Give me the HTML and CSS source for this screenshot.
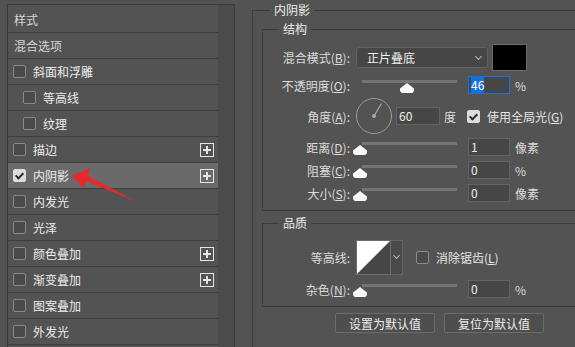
FILE: index.html
```html
<!DOCTYPE html>
<html lang="zh-CN">
<head>
  <meta charset="UTF-8" />
  <title>图层样式 - 内阴影</title>
  <link rel="stylesheet" href="styles.css">
</head>
<body>

<div class="styles-panel">
  <ul class="style-list">
    <li class="item plain">样式</li>
    <li class="item plain">混合选项</li>
    <li class="item"><span class="box"></span>斜面和浮雕</li>
    <li class="item sub"><span class="box"></span>等高线</li>
    <li class="item sub"><span class="box"></span>纹理</li>
    <li class="item"><span class="box"></span>描边<span class="add"></span></li>
    <li class="item active"><span class="box checked"></span>内阴影<span class="add"></span></li>
    <li class="item"><span class="box"></span>内发光</li>
    <li class="item"><span class="box"></span>光泽</li>
    <li class="item"><span class="box"></span>颜色叠加<span class="add"></span></li>
    <li class="item"><span class="box"></span>渐变叠加<span class="add"></span></li>
    <li class="item"><span class="box"></span>图案叠加</li>
    <li class="item"><span class="box"></span>外发光</li>
  </ul>
  <div class="gutter"></div>
</div>

<fieldset class="group outer">
  <legend>内阴影</legend>

  <fieldset class="group inner">
    <legend>结构</legend>

    <div class="row first">
      <label>混合模式(<u>B</u>):</label>
      <div class="select">正片叠底<span class="chev"></span></div>
      <div class="swatch"></div>
    </div>

    <div class="row r5">
      <label>不透明度(<u>O</u>):</label>
      <div class="slider"><div class="track"></div><span class="thumb" style="left: 44px"></span></div>
      <div class="field focus"><span class="sel">46</span></div>
      <span class="unit">%</span>
    </div>

    <div class="row angle">
      <label>角度(<u>A</u>):</label>
      <svg class="dial" width="36" height="36" viewBox="0 0 36 36">
        <circle cx="18" cy="18" r="17.5" fill="none" stroke="#9c9c9c" stroke-width="1"/>
        <line x1="18" y1="18" x2="25.5" y2="5.5" stroke="#a8a8a8" stroke-width="1.2"/>
        <circle cx="18" cy="18" r="2" fill="#a8a8a8"/>
      </svg>
      <div class="field short">60</div>
      <span class="unit deg">度</span>
      <span class="box checked"></span>
      <span class="opt">使用全局光(<u>G</u>)</span>
    </div>

    <div class="row r4">
      <label>距离(<u>D</u>):</label>
      <div class="slider"><div class="track"></div><span class="thumb" style="left: -3px"></span></div>
      <div class="field">1</div>
      <span class="unit">像素</span>
    </div>

    <div class="row r5">
      <label>阻塞(<u>C</u>):</label>
      <div class="slider"><div class="track"></div><span class="thumb" style="left: -3px"></span></div>
      <div class="field">0</div>
      <span class="unit">%</span>
    </div>

    <div class="row r5">
      <label>大小(<u>S</u>):</label>
      <div class="slider"><div class="track"></div><span class="thumb" style="left: -3px"></span></div>
      <div class="field">0</div>
      <span class="unit">像素</span>
    </div>
  </fieldset>

  <fieldset class="group inner quality">
    <legend>品质</legend>

    <div class="row contour-row">
      <label>等高线:</label>
      <div class="contour">
        <svg width="35" height="35" viewBox="0 0 35 35">
          <rect x="0" y="0" width="35" height="35" fill="#474747"/>
          <polygon points="1,1 34,1 1,34" fill="#ffffff"/>
          <rect x="0.5" y="0.5" width="34" height="34" fill="none" stroke="#6e6e6e"/>
        </svg>
        <div class="contour-drop"><span class="chev"></span></div>
      </div>
      <span class="box aa"></span>
      <span class="opt">消除锯齿(<u>L</u>)</span>
    </div>

    <div class="row r5">
      <label>杂色(<u>N</u>):</label>
      <div class="slider"><div class="track"></div><span class="thumb" style="left: -3px"></span></div>
      <div class="field">0</div>
      <span class="unit">%</span>
    </div>
  </fieldset>

  <div class="buttons">
    <button class="btn">设置为默认值</button>
    <button class="btn">复位为默认值</button>
  </div>
</fieldset>

<svg class="arrow" width="575" height="347" viewBox="0 0 575 347">
  <polygon points="72,176 90,168 88,176 137,202 86,181 84,188" fill="#e8282b"/>
</svg>

</body>
</html>
```

FILE: styles.css
```css
body {
  margin: 0;
  width: 575px;
  height: 347px;
  overflow: hidden;
  background-color: #535353;
  font-family: "Noto Sans CJK SC", "Noto Sans", sans-serif;
  font-size: 12px;
  color: #e2e2e2;
  display: flex;
  align-items: flex-start;
  position: relative;
}

u {
  text-decoration: underline;
  text-underline-offset: 1px;
}

/* left list */
.styles-panel {
  margin: 4px 0 0 7px;
  width: 226px;
  height: 343px;
  border: 1px solid #3b3b3b;
  border-bottom: none;
  display: flex;
  flex-shrink: 0;
  overflow: hidden;
}

.style-list {
  list-style: none;
  margin: 0;
  padding: 2px 0 0;
  width: 210px;
}

.item {
  height: 25px;
  border-bottom: 1px solid #3d3d3d;
  display: flex;
  align-items: center;
  padding-left: 5px;
  line-height: 25px;
  color: #ececec;
}

.item.plain {
  padding-left: 6px;
  color: #d6d6d6;
}

.item.sub {
  padding-left: 15px;
}

.item.active {
  background-color: #6a6a6a;
}

.box {
  width: 11px;
  height: 11px;
  border: 1px solid #8a8a8a;
  border-radius: 2px;
  background-color: #4a4a4a;
  margin-right: 7px;
  flex-shrink: 0;
  position: relative;
}

.box.checked {
  background-color: #dcdcdc;
  border-color: #dcdcdc;
}

.box.checked::after {
  content: "";
  position: absolute;
  left: 3px;
  top: 1px;
  width: 3px;
  height: 6px;
  border: solid #2a2a2a;
  border-width: 0 2px 2px 0;
  transform: rotate(45deg);
}

.add {
  margin-left: auto;
  margin-right: 4px;
  width: 12px;
  height: 12px;
  border: 1.5px solid #e4e4e4;
  position: relative;
}

.add::before,
.add::after {
  content: "";
  position: absolute;
  background-color: #e4e4e4;
}

.add::before {
  left: 2px;
  right: 2px;
  top: 5px;
  height: 2px;
}

.add::after {
  top: 2px;
  bottom: 2px;
  left: 5px;
  width: 2px;
}

.gutter {
  flex: 1;
  background-color: #4b4b4b;
}

/* right side groups */
.group {
  margin: 0;
  padding: 0;
  border: 1px solid #3c3c3c;
  min-width: 0;
}

.group legend {
  padding: 0 4px;
  line-height: 16px;
  color: #ececec;
}

.outer {
  margin: 2px 0 0 17px;
  width: 340px;
  height: 345px;
  border-bottom: none;
  flex-shrink: 0;
  overflow: hidden;
}

.outer > legend {
  margin-left: 17px;
}

.inner {
  margin: 3px 0 0 9px;
  width: 320px;
  padding-top: 7px;
  padding-bottom: 8px;
}

.inner > legend {
  margin-left: 16px;
}

.quality {
  margin-top: 4px;
  padding-top: 9px;
}

.row {
  display: flex;
  align-items: center;
  height: 18px;
}

.row label {
  width: 87px;
  text-align: right;
  margin-right: 6px;
  color: #dcdcdc;
  flex-shrink: 0;
}

.row.first {
  height: 27px;
}

.row.r5 {
  margin-top: 5px;
}

.row.r4 {
  margin-top: 4px;
}

.row.angle {
  height: 36px;
  margin-top: 4px;
}

.select {
  width: 120px;
  height: 19px;
  padding-left: 10px;
  line-height: 19px;
  background-color: #464646;
  border: 1px solid #616161;
  border-radius: 3px;
  position: relative;
  color: #f0f0f0;
}

.chev {
  position: absolute;
  width: 4px;
  height: 4px;
  border: solid #b4b4b4;
  border-width: 0 1px 1px 0;
  transform: rotate(45deg);
}

.select .chev {
  right: 6px;
  top: 6px;
}

.swatch {
  margin-left: 4px;
  width: 33px;
  height: 25px;
  background-color: #000;
  border: 1px solid #6a6a6a;
}

.slider {
  width: 106px;
  height: 18px;
  margin-right: 6px;
  position: relative;
}

.track {
  margin: 4px 0 0 6px;
  width: 95px;
  height: 3px;
  background-color: #747474;
}

.thumb {
  position: absolute;
  top: 7px;
  width: 14px;
  height: 10px;
  background-color: #fafafa;
  clip-path: polygon(50% 0, 100% 55%, 100% 80%, 88% 100%, 12% 100%, 0 80%, 0 55%);
}

.field {
  width: 38px;
  height: 16px;
  padding-left: 2px;
  line-height: 16px;
  background-color: #464646;
  border: 1px solid #636363;
  color: #eeeeee;
  flex-shrink: 0;
}

.field.focus {
  border-color: #1473e6;
}

.sel {
  background-color: #1a6fd6;
  color: #fff;
}

.unit {
  margin-left: 5px;
  color: #dcdcdc;
}

.dial {
  flex-shrink: 0;
}

.field.short {
  margin-left: 4px;
  width: 40px;
}

.unit.deg {
  margin-left: 4px;
}

.row .box {
  margin-left: 13px;
  width: 11px;
  height: 11px;
}

.row.angle .box {
  margin-left: 11px;
}

.opt {
  color: #e6e6e6;
}

.contour-row {
  height: 35px;
}

.contour {
  display: flex;
  height: 35px;
}

.contour svg {
  display: block;
}

.contour-drop {
  width: 11px;
  height: 33px;
  border: 1px solid #636363;
  border-left: none;
  background-color: #4a4a4a;
  position: relative;
}

.contour-drop .chev {
  left: 3px;
  top: 12px;
}

.buttons {
  display: flex;
  gap: 9px;
  margin: 6px 0 0 82px;
}

.btn {
  width: 100px;
  height: 20px;
  padding: 0;
  font-family: inherit;
  font-size: 12px;
  color: #ececec;
  background-color: #4e4e4e;
  border: 1px solid #6b6b6b;
  border-radius: 2px;
}

.arrow {
  position: absolute;
  left: 0;
  top: 0;
  pointer-events: none;
}
```
